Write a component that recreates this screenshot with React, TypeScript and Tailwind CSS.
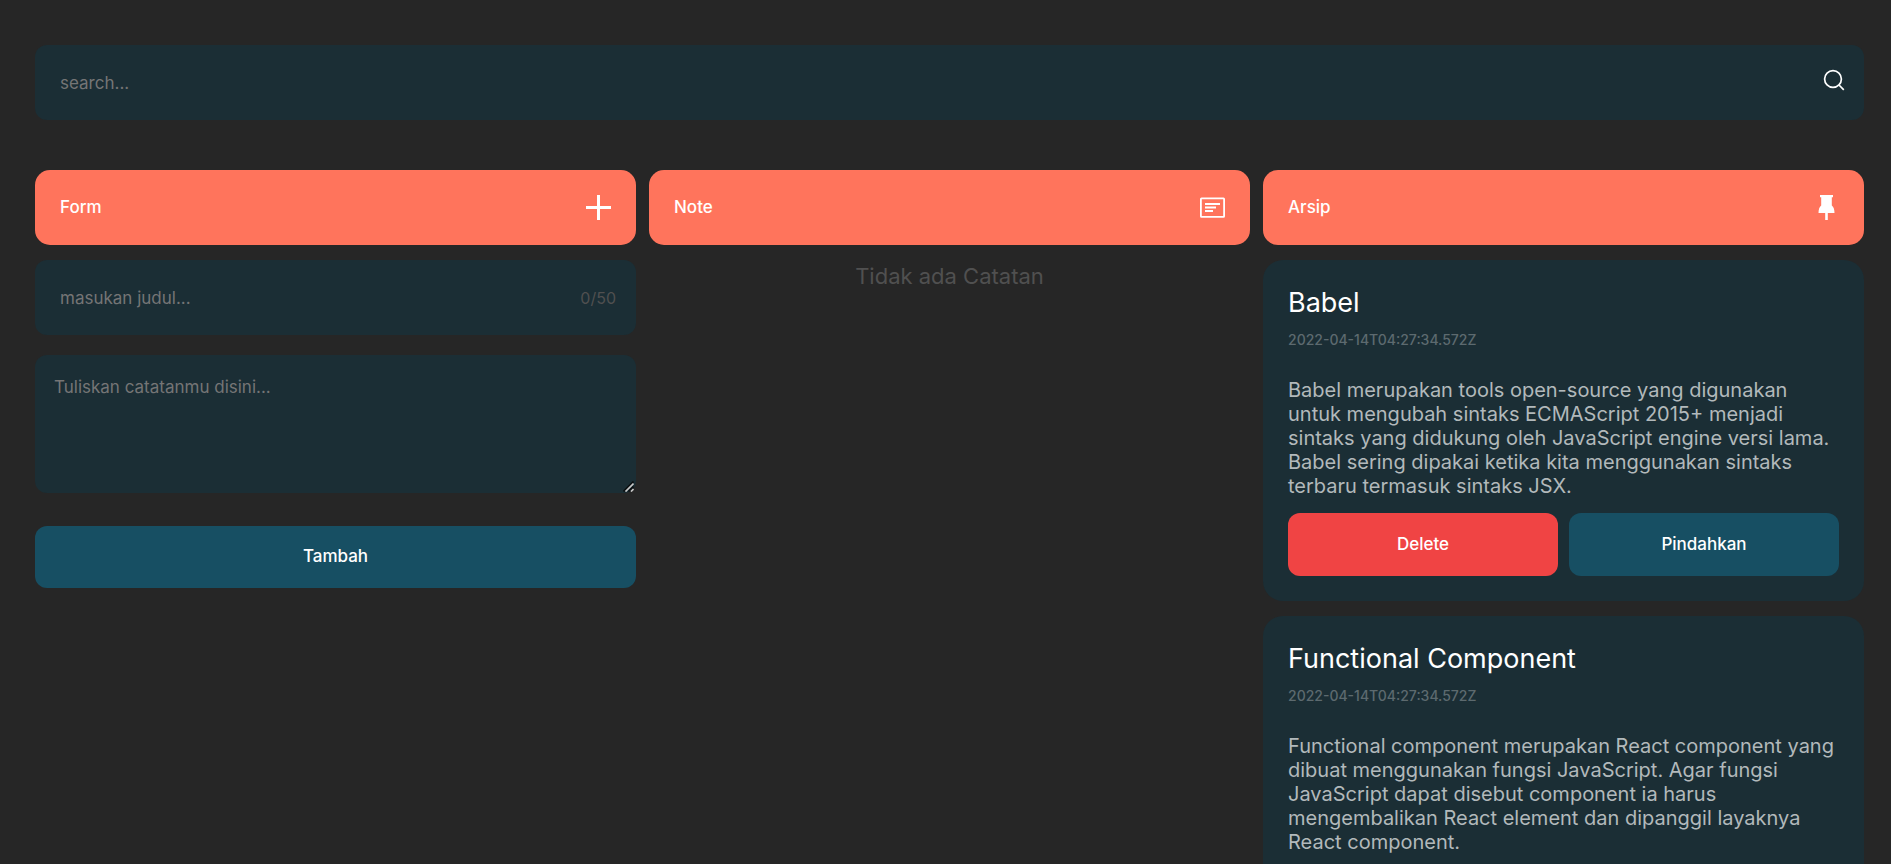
import { useState } from "react";
import type { FormEvent, ReactNode } from "react";

type Note = {
  id: number;
  title: string;
  body: string;
  createdAt: string;
  archived: boolean;
};

const TITLE_LIMIT = 50;

const initialNotes: Note[] = [
  {
    id: 1,
    title: "Babel",
    body: "Babel merupakan tools open-source yang digunakan untuk mengubah sintaks ECMAScript 2015+ menjadi sintaks yang didukung oleh JavaScript engine versi lama. Babel sering dipakai ketika kita menggunakan sintaks terbaru termasuk sintaks JSX.",
    createdAt: "2022-04-14T04:27:34.572Z",
    archived: true,
  },
  {
    id: 2,
    title: "Functional Component",
    body: "Functional component merupakan React component yang dibuat menggunakan fungsi JavaScript. Agar fungsi JavaScript dapat disebut component ia harus mengembalikan React element dan dipanggil layaknya React component.",
    createdAt: "2022-04-14T04:27:34.572Z",
    archived: true,
  },
];

function SearchIcon() {
  return (
    <svg width="22" height="22" viewBox="0 0 22 22" fill="none" stroke="currentColor" strokeWidth="1.7">
      <circle cx="10" cy="10" r="8.4" />
      <path d="M16 16l4.8 4.8" />
    </svg>
  );
}

function PlusIcon() {
  return (
    <svg width="25" height="25" viewBox="0 0 25 25" fill="currentColor">
      <path d="M11 0h3v11h11v3H14v11h-3V14H0v-3h11z" />
    </svg>
  );
}

function NoteIcon() {
  return (
    <svg width="25" height="25" viewBox="0 0 25 25" fill="none" stroke="currentColor" strokeWidth="1.8">
      <rect x="0.9" y="3.4" width="23.2" height="18.4" rx="0.6" />
      <path d="M5 9h15M5 12.500h11M5 16h8" />
    </svg>
  );
}

function PinIcon() {
  return (
    <svg width="25" height="25" viewBox="0 0 25 25" fill="currentColor">
      <path d="M6 0h13v2.200h-1.200v8.300c1.700 1.500 2.700 3.600 2.700 7.500h-6.700v7h-2.600v-7H4.500c0-3.900 1-6 2.700-7.500V2.200H6z" />
    </svg>
  );
}

function ResizeGrip() {
  return (
    <svg
      className="pointer-events-none absolute right-0.5 bottom-px"
      width="11"
      height="11"
      viewBox="0 0 11 11"
      fill="none"
      strokeWidth="1.7"
    >
      <path d="M0.500 10.500L10.500 0.500M5.500 10.500l5-5" stroke="#0b0f11" />
      <path d="M2.500 10.500l8-8M8 10.500l2.500-2.500" stroke="#c8c8c8" />
    </svg>
  );
}

function ColumnHeader({ title, icon }: { title: string; icon: ReactNode }) {
  return (
    <div className="mb-[15px] flex h-[75px] items-center justify-between rounded-[15px] bg-[#ff745c] px-[25px] text-white">
      <h2 className="text-[17px] font-medium">{title}</h2>
      {icon}
    </div>
  );
}

function NoteCard({ note, onDelete, onMove }: { note: Note; onDelete: () => void; onMove: () => void }) {
  return (
    <article className="mb-[15px] rounded-[20px] bg-[#1b2e35] p-[25px]">
      <h3 className="text-[27px] leading-9 text-white">{note.title}</h3>
      <p className="mt-2 text-[14px] leading-[22px] font-medium text-[#5d6a6f]">{note.createdAt}</p>
      <p className="mt-[27px] text-[20px] leading-6 text-[#b2b9bb]">{note.body}</p>
      <div className="mt-[15px] flex gap-[11px] text-[17px] font-medium text-white">
        <button type="button" onClick={onDelete} className="h-[63px] flex-1 rounded-xl bg-[#f04444]">
          Delete
        </button>
        <button type="button" onClick={onMove} className="h-[63px] flex-1 rounded-xl bg-[#174f63]">
          Pindahkan
        </button>
      </div>
    </article>
  );
}

export default function App() {
  const [notes, setNotes] = useState<Note[]>(initialNotes);
  const [keyword, setKeyword] = useState("");
  const [title, setTitle] = useState("");
  const [body, setBody] = useState("");

  const found = notes.filter((n) => n.title.toLowerCase().includes(keyword.toLowerCase()));

  const addNote = (e: FormEvent) => {
    e.preventDefault();
    if (!title.trim() || !body.trim()) return;
    setNotes([...notes, { id: Date.now(), title, body, createdAt: new Date().toISOString(), archived: false }]);
    setTitle("");
    setBody("");
  };

  const renderNotes = (archived: boolean) => {
    const list = found.filter((n) => n.archived === archived);
    if (list.length === 0) {
      return <p className="text-center text-[22px] leading-8 text-[#505050]">Tidak ada Catatan</p>;
    }
    return list.map((note) => (
      <NoteCard
        key={note.id}
        note={note}
        onDelete={() => setNotes(notes.filter((n) => n.id !== note.id))}
        onMove={() => setNotes(notes.map((n) => (n.id === note.id ? { ...n, archived: !n.archived } : n)))}
      />
    ));
  };

  return (
    <div className="min-h-screen bg-[#262626] pt-[45px] pr-[27px] pl-[35px] font-['Inter',sans-serif]">
      <div className="mb-[50px] flex h-[75px] items-center rounded-xl bg-[#1b2e35] pr-[19px] text-white">
        <input
          type="search"
          aria-label="search"
          value={keyword}
          onChange={(e) => setKeyword(e.target.value)}
          placeholder="search..."
          className="h-full flex-1 bg-transparent pl-[25px] text-[17px] outline-none placeholder:text-[#757575]"
        />
        <button type="button" aria-label="Cari" className="pb-[5px]">
          <SearchIcon />
        </button>
      </div>

      <main className="grid grid-cols-3 items-start gap-[13px]">
        <section>
          <ColumnHeader title="Form" icon={<PlusIcon />} />
          <form onSubmit={addNote}>
            <div className="mb-5 flex h-[75px] items-center rounded-xl bg-[#1b2e35] pr-5">
              <input
                type="text"
                aria-label="Judul"
                maxLength={TITLE_LIMIT}
                value={title}
                onChange={(e) => setTitle(e.target.value)}
                placeholder="masukan judul..."
                className="h-full flex-1 bg-transparent pl-[25px] text-[17px] text-white outline-none placeholder:text-[#757575]"
              />
              <span className="text-[16px] text-[#505050]">
                {title.length}/{TITLE_LIMIT}
              </span>
            </div>
            <div className="relative">
              <textarea
                aria-label="Catatan"
                value={body}
                onChange={(e) => setBody(e.target.value)}
                placeholder="Tuliskan catatanmu disini..."
                className="block h-[138px] w-full resize-y rounded-xl bg-[#1b2e35] px-[19px] py-5 text-[17px] leading-6 text-white outline-none placeholder:text-[#757575] [&::-webkit-resizer]:bg-transparent"
              />
              <ResizeGrip />
            </div>
            <button
              type="submit"
              className="mt-[33px] h-[62px] w-full rounded-xl bg-[#174f63] text-[17px] font-medium text-white"
            >
              Tambah
            </button>
          </form>
        </section>

        <section>
          <ColumnHeader title="Note" icon={<NoteIcon />} />
          {renderNotes(false)}
        </section>

        <section>
          <ColumnHeader title="Arsip" icon={<PinIcon />} />
          {renderNotes(true)}
        </section>
      </main>
    </div>
  );
}
